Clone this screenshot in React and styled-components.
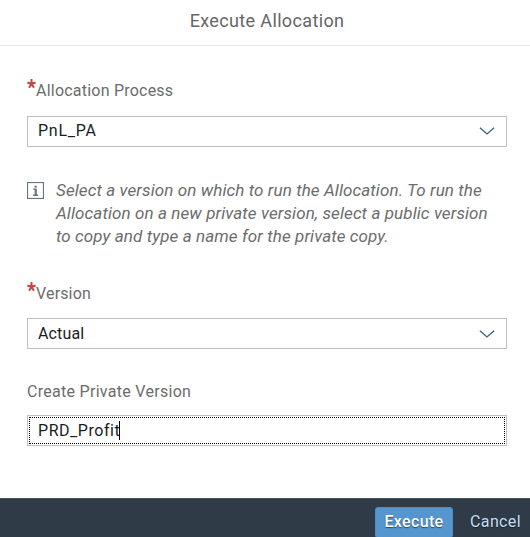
import React from 'react';
import styled, { createGlobalStyle } from 'styled-components';

const colors = {
  text: '#1c1c1c',
  label: '#6c6c6c',
  border: '#bfbfbf',
  required: '#c14646',
  arrow: '#346187',
  icon: '#68767e',
  footer: '#2f3c48',
  primary: '#5496cd',
};

const GlobalStyle = createGlobalStyle`
  * {
    box-sizing: border-box;
  }
  body {
    margin: 0;
    background: #fff;
    overflow: hidden;
    font-family: Roboto, "Liberation Sans", sans-serif;
  }
`;

const Dialog = styled.div`
  width: 530px;
  height: 537px;
  display: flex;
  flex-direction: column;
  overflow: hidden;
`;

const Header = styled.header`
  height: 46px;
  padding: 9px 0 0 4px;
  border-bottom: 1px solid #e5e5e5;
  color: #666;
  font-size: 18px;
  line-height: 24px;
  letter-spacing: 0.36px;
  text-align: center;
`;

const Body = styled.main`
  flex: 1;
  padding: 34px 23px 0 27px;
`;

const Field = styled.div`
  margin-top: ${props => props.$gap || 0}px;
`;

const Label = styled.div`
  display: flex;
  height: ${props => props.$height || 36}px;
  color: ${colors.label};
  font-size: 16px;
  line-height: 22px;
  letter-spacing: ${props => props.$spacing || 0}px;
`;

const Required = styled.svg`
  width: 9px;
  height: 10px;
  margin-top: -1px;
  flex: none;
`;

const Box = styled.div`
  display: flex;
  align-items: center;
  justify-content: space-between;
  height: 31px;
  padding: ${props => (props.$low ? '1px 11px 0 10px' : '0 11px 1px 10px')};
  border: 1px solid ${colors.border};
  color: ${colors.text};
  font-size: 16px;
  line-height: 20px;
  letter-spacing: ${props => props.$spacing || 0}px;
`;

const FocusBox = styled.div`
  height: 31px;
  padding: 1px;
  border: 1px solid ${colors.border};
`;

const FocusInner = styled.div`
  display: flex;
  align-items: center;
  height: 27px;
  padding: 0 8px;
  border: 1px dotted #000;
  color: ${colors.text};
  font-size: 16px;
  line-height: 20px;
  letter-spacing: 0.55px;
`;

const Caret = styled.span`
  width: 1px;
  height: 19px;
  margin-left: -1px;
  background: #000;
`;

const Info = styled.div`
  display: flex;
  gap: 12px;
  margin-top: 32px;
`;

const InfoText = styled.p`
  margin: 0;
  color: ${colors.label};
  font-size: 17px;
  font-style: italic;
  line-height: 23px;
  letter-spacing: 0.1px;
  white-space: nowrap;
`;

const InfoIcon = styled.svg`
  width: 17px;
  height: 17px;
  margin-top: 3px;
  flex: none;
`;

const Footer = styled.footer`
  display: flex;
  height: 39px;
  padding: 8px 9px 0 0;
  gap: 17px;
  justify-content: flex-end;
  border-top: 1px solid #43515d;
  background: ${colors.footer};
`;

const Button = styled.button`
  height: 31px;
  padding: 0 0 3px;
  width: ${props => (props.$primary ? 78 : 51)}px;
  border: ${props => (props.$primary ? '1px solid #4a8fc9' : 'none')};
  border-radius: 3px;
  background: ${props => (props.$primary ? colors.primary : 'transparent')};
  color: ${props => (props.$primary ? '#fff' : '#c5def5')};
  font-family: inherit;
  font-size: 16px;
  font-weight: ${props => (props.$primary ? 500 : 400)};
  letter-spacing: 0.35px;
  white-space: nowrap;
  text-shadow: 0 1px 1px rgba(0, 0, 0, 0.5);
`;

const Star = () => (
  <Required viewBox="0 0 9 10" fill="none" stroke={colors.required} strokeWidth="2">
    <path d="M4.5 0V5M4.5 5L0.4 3.5M4.5 5L8.6 3.5M4.5 5L2 8.8M4.5 5L7 8.8" />
  </Required>
);

const Arrow = () => (
  <svg width="16" height="8" viewBox="0 0 16 8" fill="none" stroke={colors.arrow} strokeWidth="1.3">
    <path d="M0.9 0.8L8 7L15.1 0.8" />
  </svg>
);

const App = () => {
  return (
    <>
      <GlobalStyle />
      <Dialog>
        <Header>Execute Allocation</Header>
        <Body>
          <Field>
            <Label $spacing={0.22}>
              <Star />
              <span>Allocation Process</span>
            </Label>
            <Box $spacing={0.75}>
              <span>PnL_PA</span>
              <Arrow />
            </Box>
          </Field>

          <Info>
            <InfoIcon viewBox="0 0 17 17" fill="none" stroke={colors.icon}>
              <rect x="0.5" y="0.5" width="16" height="16" strokeWidth="1.2" />
              <path d="M6.3 7.2H8.6V13M6 13.2H11.2" strokeWidth="1.5" />
              <path d="M8.8 7V13" strokeWidth="2" />
              <path d="M7.5 4.7H9.7" strokeWidth="2" />
            </InfoIcon>
            <InfoText>
              Select a version on which to run the Allocation. To run the<br />
              Allocation on a new private version, select a public version<br />
              to copy and type a name for the private copy.
            </InfoText>
          </Info>

          <Field $gap={35}>
            <Label $height={35} $spacing={0.15}>
              <Star />
              <span>Version</span>
            </Label>
            <Box $low $spacing={0.15}>
              <span>Actual</span>
              <Arrow />
            </Box>
          </Field>

          <Field $gap={32}>
            <Label $height={34} $spacing={0.29}>Create Private Version</Label>
            <FocusBox>
              <FocusInner>
                <span>PRD_Profit</span>
                <Caret />
              </FocusInner>
            </FocusBox>
          </Field>
        </Body>
        <Footer>
          <Button $primary>Execute</Button>
          <Button>Cancel</Button>
        </Footer>
      </Dialog>
    </>
  );
};

export default App;
